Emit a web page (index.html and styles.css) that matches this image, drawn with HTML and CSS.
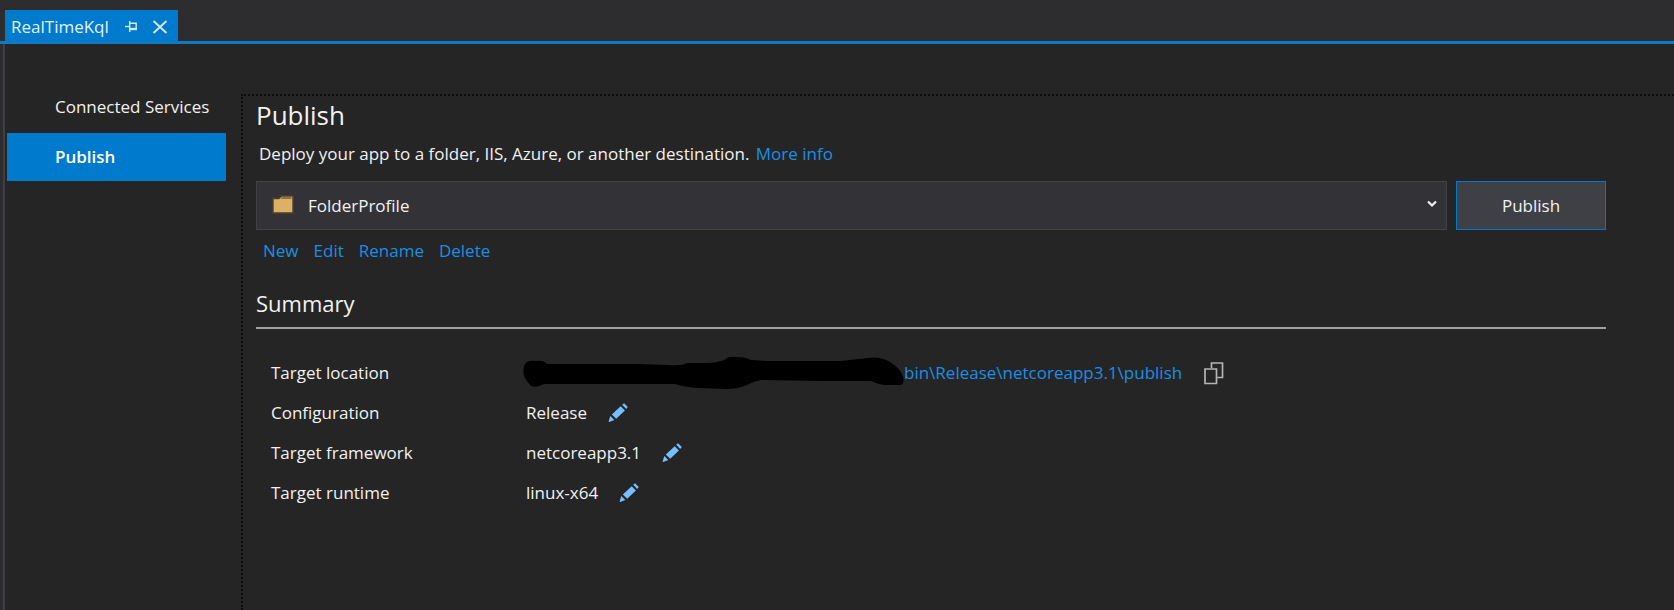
FILE: index.html
```html
<!DOCTYPE html>
<html lang="en">
<head>
<meta charset="utf-8">
<title>RealTimeKql</title>
<link rel="stylesheet" href="styles.css">
</head>
<body>
<svg class="defs" aria-hidden="true">
  <symbol id="pencil" viewBox="0 0 20 20">
    <path d="M14.200 1.800L16 .2l3.800 3.800-1.600 1.900zM12.700 3.200l4.200 4.200-8.700 8.400-4.400-4.200zM2.300 13l4 4-5 2.100-.7-.6z" fill="#75beff"/>
  </symbol>
</svg>
<header class="tabs">
  <div class="tab">
    <span class="tab-title">RealTimeKql</span>
    <button class="tab-button pin" aria-label="Pin tab">
      <svg width="12" height="12" viewBox="0 0 12 12" fill="none" stroke="#d3e8f7"><path d="M0 5.500h4.500" stroke-width="1.400"/><path d="M4.700 0v11" stroke-width="1.500"/><path d="M5 2.200h6.200v6" stroke-width="1.400"/><path d="M5 8h7" stroke-width="2.400"/></svg>
    </button>
    <button class="tab-button" aria-label="Close tab">
      <svg width="16" height="14" viewBox="0 0 16 14" fill="none" stroke="#d3e8f7" stroke-width="2"><path d="M1.500 1l13 12M14.500 1l-13 12"/></svg>
    </button>
  </div>
</header>
<div class="document">
  <nav class="sidebar">
    <a class="nav-item" href="#services">Connected Services</a>
    <a class="nav-item active" href="#publish">Publish</a>
  </nav>
  <main class="content">
    <h1>Publish</h1>
    <p class="intro">Deploy your app to a folder, IIS, Azure, or another destination. <a class="more" href="#info">More info</a></p>
    <div class="profile-bar">
      <div class="profile">
        <select class="profile-select" aria-label="Publish profile"><option>FolderProfile</option></select>
        <svg class="folder" width="22" height="19" viewBox="0 0 22 19"><path d="M1 3.500h6L9.500 1H21v17H1z" fill="#dcb067" stroke="#4e4028" stroke-width="1.400"/><path d="M9 3.600l1-1.100h9.500v1.100z" fill="#3b342b"/></svg>
        <svg class="chevron" width="10" height="8" viewBox="0 0 10 8"><path d="M1 1.500l4 4 4-4" fill="none" stroke="#f1f1f1" stroke-width="2.200"/></svg>
      </div>
      <button class="publish">Publish</button>
    </div>
    <div class="actions">
      <a href="#new">New</a>
      <a href="#edit">Edit</a>
      <a href="#rename">Rename</a>
      <a href="#delete">Delete</a>
    </div>
    <h2>Summary</h2>
    <dl class="summary">
      <dt>Target location</dt>
      <dd class="location">
        <svg class="redaction" width="381" height="34" viewBox="0 0 381 34" role="img" aria-label="Redacted path"><path d="M4 6Q7 4 13 5Q20 4 24 8H115L145 9Q160 10 164 7H185Q198 6 203 3Q205 0 214 1Q222 1 228 4L245 5H318L345 2Q357 0 367 6Q378 13 380 21Q382 28 377 29H362Q354 28 348 25H300L238 24Q231 25 224 29Q214 33 204 33L175 32Q162 31 152 28H21Q14 32 8 30Q4 26 1 20Q-1 10 4 6Z"/></svg>
        <a href="#folder">bin\Release\netcoreapp3.1\publish</a>
        <button class="icon-button copy" aria-label="Copy path"><svg width="20" height="23" viewBox="0 0 20 23" fill="none" stroke="#b4b4b4" stroke-width="1.700"><path d="M1 7h11.500v14.500H1zM7.500 6V1h11v14.500h-5"/></svg></button>
      </dd>
      <dt>Configuration</dt>
      <dd>Release <button class="icon-button" aria-label="Edit configuration"><svg width="20" height="20"><use href="#pencil"/></svg></button></dd>
      <dt>Target framework</dt>
      <dd>netcoreapp3.1 <button class="icon-button" aria-label="Edit target framework"><svg width="20" height="20"><use href="#pencil"/></svg></button></dd>
      <dt>Target runtime</dt>
      <dd>linux-x64 <button class="icon-button" aria-label="Edit target runtime"><svg width="20" height="20"><use href="#pencil"/></svg></button></dd>
    </dl>
  </main>
</div>
</body>
</html>
```
FILE: styles.css
```css
* { box-sizing: border-box; }
body {
  margin: 0;
  min-height: 100vh;
  display: flex;
  flex-direction: column;
  background: #2d2d30;
  color: #f1f1f1;
  font: 17px/24px "Open Sans", "Noto Sans", sans-serif;
}
a { color: #1c8fe3; text-decoration: none; }
button, select { font: inherit; color: inherit; }
svg { display: block; flex: none; }
.defs { position: absolute; width: 0; height: 0; }

.tabs {
  display: flex;
  padding: 10px 0 0 5px;
  border-bottom: 3px solid #0e7ac4;
}
.tab {
  display: flex;
  align-items: center;
  height: 31px;
  padding: 3px 10px 0 6px;
  background: #007acc;
  color: #e4f1fa;
}
.tab-button { padding: 0; border: 0; background: none; }
.tab-button.pin { margin: 0 15px 0 16px; }

.document {
  flex: 1;
  display: flex;
  margin-left: 3px;
  border-left: 2px solid #3f3f46;
  background: #252526;
}
.sidebar {
  width: 221px;
  flex: none;
  padding: 39px 0 0 2px;
}
.nav-item {
  display: block;
  padding: 12px 0 12px 48px;
  color: #f1f1f1;
}
.nav-item:first-child { margin-bottom: 2px; }
.nav-item.active {
  background: #007acc;
  color: #fff;
  font-weight: 600;
}

.content {
  flex: 1;
  min-width: 0;
  margin: 50px 0 0 15px;
  padding: 3px 68px 0 13px;
  border: dotted #0c0c0c;
  border-width: 2px 0 0 2px;
}
h1, h2, p, dl, dd { margin: 0; font-weight: 400; }
h1 { font-size: 26px; line-height: 32px; }
.intro { margin: 11px 0 15px 3px; }
.more { margin-left: 2px; }

.profile-bar { display: flex; gap: 9px; }
.profile { position: relative; flex: 1; }
.profile-select {
  width: 100%;
  height: 49px;
  padding: 0 40px 0 51px;
  appearance: none;
  border: 1px solid #434346;
  border-radius: 0;
  background: #333337;
}
.folder { position: absolute; left: 16px; top: 14px; }
.chevron { position: absolute; right: 10px; top: 19px; }
.publish {
  width: 150px;
  border: 1px solid #007acc;
  background: #3f3f46;
}
.actions {
  display: flex;
  gap: 15px;
  margin: 9px 0 0 7px;
}
h2 {
  margin-top: 25px;
  padding-bottom: 9px;
  border-bottom: 2px solid #a0a0a0;
  font-size: 22px;
  line-height: 30px;
}
.summary {
  display: grid;
  grid-template-columns: 255px 1fr;
  grid-auto-rows: 40px;
  align-items: center;
  margin: 24px 0 0 15px;
}
.summary dd { display: flex; align-items: center; }
.icon-button {
  margin-left: 21px;
  padding: 0;
  border: 0;
  background: none;
}
.icon-button.copy { margin-left: 22px; }
.redaction { margin-left: -3px; }
```
